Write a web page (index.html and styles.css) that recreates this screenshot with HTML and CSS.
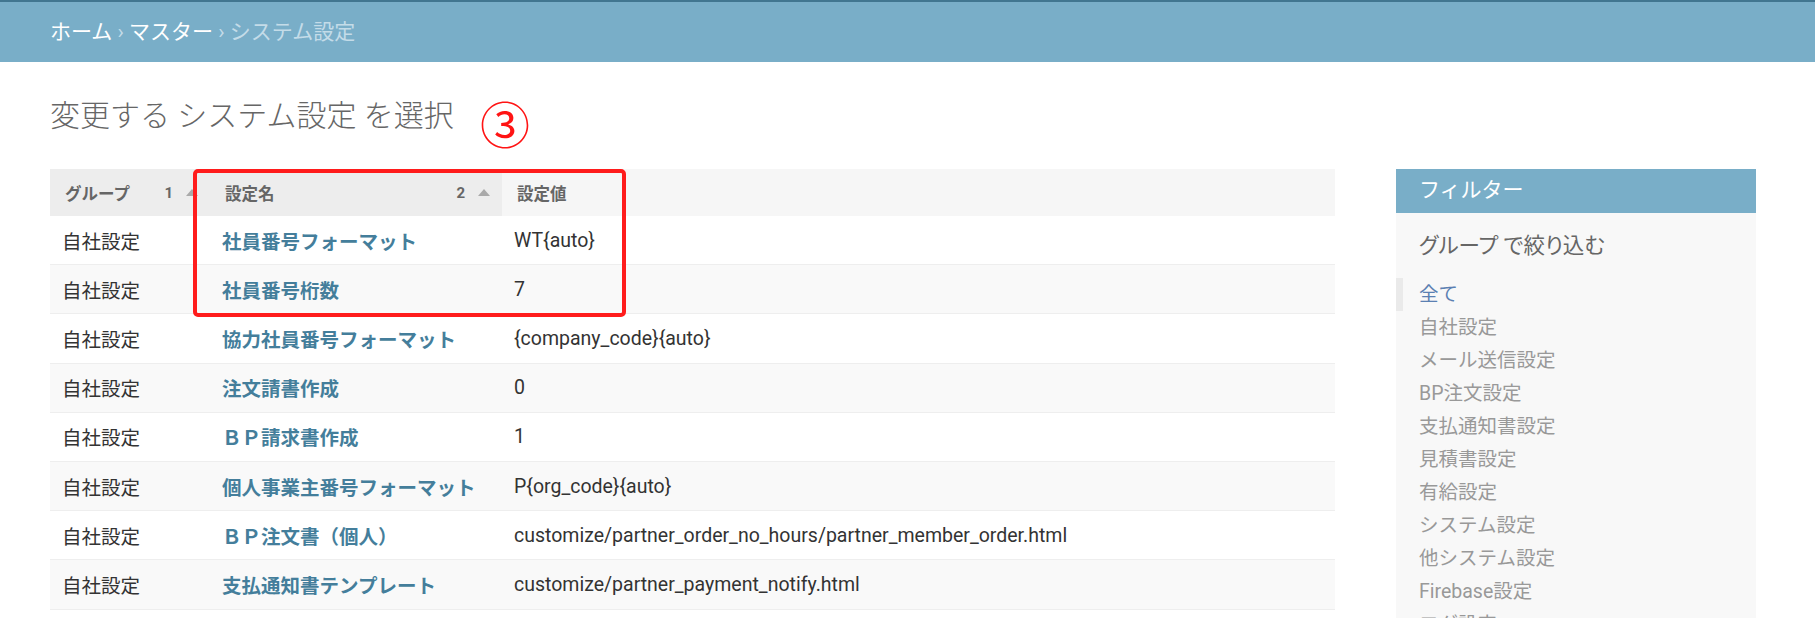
FILE: index.html
```html
<!DOCTYPE html>
<html lang="ja">
<head>
    <meta charset="UTF-8">
    <title>変更する システム設定 を選択</title>
    <link rel="stylesheet" href="styles.css">
</head>
<body>
    <!-- Breadcrumbs -->
    <div class="breadcrumbs">
        <a href="#">ホーム</a> › <a href="#">マスター</a> › システム設定
    </div>

    <div class="content">
        <h1 class="title">変更する システム設定 を選択<span class="marker">③</span></h1>

        <div class="changelist">
            <div class="results">
                <table class="result-list">
                    <colgroup>
                        <col class="col-group">
                        <col class="col-name">
                        <col class="col-value">
                    </colgroup>
                    <thead>
                        <tr>
                            <th class="sorted">
                                <div class="th-inner">
                                    <span>グループ</span>
                                    <span class="sortoptions">
                                        <span class="priority">1</span>
                                        <svg class="arrow" width="12" height="7" viewBox="0 0 12 7"><path d="M0 7 L6 0 L12 7 Z" fill="#aaa"/></svg>
                                    </span>
                                </div>
                            </th>
                            <th class="sorted">
                                <div class="th-inner">
                                    <span>設定名</span>
                                    <span class="sortoptions">
                                        <span class="priority">2</span>
                                        <svg class="arrow" width="12" height="7" viewBox="0 0 12 7"><path d="M0 7 L6 0 L12 7 Z" fill="#aaa"/></svg>
                                    </span>
                                </div>
                            </th>
                            <th>
                                <div class="th-inner"><span>設定値</span></div>
                            </th>
                        </tr>
                    </thead>
                    <tbody>
                        <tr><td>自社設定</td><td><a href="#">社員番号フォーマット</a></td><td>WT{auto}</td></tr>
                        <tr><td>自社設定</td><td><a href="#">社員番号桁数</a></td><td>7</td></tr>
                        <tr><td>自社設定</td><td><a href="#">協力社員番号フォーマット</a></td><td>{company_code}{auto}</td></tr>
                        <tr><td>自社設定</td><td><a href="#">注文請書作成</a></td><td>0</td></tr>
                        <tr><td>自社設定</td><td><a href="#">ＢＰ請求書作成</a></td><td>1</td></tr>
                        <tr><td>自社設定</td><td><a href="#">個人事業主番号フォーマット</a></td><td>P{org_code}{auto}</td></tr>
                        <tr><td>自社設定</td><td><a href="#">ＢＰ注文書（個人）</a></td><td>customize/partner_order_no_hours/partner_member_order.html</td></tr>
                        <tr><td>自社設定</td><td><a href="#">支払通知書テンプレート</a></td><td>customize/partner_payment_notify.html</td></tr>
                    </tbody>
                </table>
                <!-- annotation box -->
                <div class="highlight"></div>
            </div>

            <!-- Filter -->
            <div class="filter">
                <h2>フィルター</h2>
                <h3>グループ で絞り込む</h3>
                <ul>
                    <li class="selected"><a href="#">全て</a></li>
                    <li><a href="#">自社設定</a></li>
                    <li><a href="#">メール送信設定</a></li>
                    <li><a href="#">BP注文設定</a></li>
                    <li><a href="#">支払通知書設定</a></li>
                    <li><a href="#">見積書設定</a></li>
                    <li><a href="#">有給設定</a></li>
                    <li><a href="#">システム設定</a></li>
                    <li><a href="#">他システム設定</a></li>
                    <li><a href="#">Firebase設定</a></li>
                    <li><a href="#">ログ設定</a></li>
                </ul>
            </div>
        </div>
    </div>
</body>
</html>
```

FILE: styles.css
```css
body {
    margin: 0;
    font-family: Roboto, "Noto Sans CJK JP", sans-serif;
    color: #333;
    background: #fff;
    overflow: hidden;
}

a {
    text-decoration: none;
}

.breadcrumbs {
    border-top: 2px solid #417690;
    background-color: #79aec8;
    color: #c4dce8;
    font-size: 21px;
    line-height: 30px;
    padding: 15px 50px;
}

.breadcrumbs a {
    color: #fff;
}

.content {
    padding: 36px 59px 0 50px;
}

.title {
    position: relative;
    margin: 0 0 35px;
    font-size: 30px;
    line-height: 36px;
    font-weight: 300;
    color: #666;
}

.marker {
    position: absolute;
    left: 430px;
    top: 4px;
    font-size: 50px;
    line-height: 50px;
    font-weight: 400;
    color: #ff1414;
}

.changelist {
    display: flex;
    align-items: flex-start;
}

.results {
    position: relative;
    flex: 1;
}

.result-list {
    width: 100%;
    border-collapse: collapse;
    table-layout: fixed;
}

.col-group {
    width: 160px;
}

.col-name {
    width: 292px;
}

.result-list th {
    height: 47px;
    padding: 0 12px 0 15px;
    background-color: #f6f6f6;
    color: #666;
    font-size: 16.5px;
    font-weight: bold;
    text-align: left;
    white-space: nowrap;
    vertical-align: middle;
}

.result-list th.sorted {
    background-color: #ededed;
}

.th-inner {
    display: flex;
    justify-content: space-between;
    align-items: center;
}

.sortoptions {
    display: flex;
    align-items: center;
    gap: 13px;
}

.priority {
    font-size: 15px;
    color: #666;
}

.arrow {
    display: block;
}

.result-list td {
    height: 48.2px;
    padding: 0 12px;
    border-bottom: 1px solid #eee;
    font-size: 19.5px;
    white-space: nowrap;
    vertical-align: middle;
}

.result-list tbody tr:nth-child(even) td {
    background-color: #f9f9f9;
}

.result-list td a {
    color: #447e9b;
    font-weight: bold;
}

.highlight {
    position: absolute;
    left: 143px;
    top: 0;
    width: 433px;
    height: 148px;
    box-sizing: border-box;
    border: 4px solid #ff1c1c;
    border-radius: 5px;
}

.filter {
    width: 360px;
    margin-left: 61px;
    min-height: 600px;
    background-color: #f8f8f8;
}

.filter h2 {
    margin: 0;
    padding: 7px 23px 8px;
    background-color: #79aec8;
    color: #fff;
    font-size: 21px;
    line-height: 29px;
    font-weight: 400;
}

.filter h3 {
    margin: 20px 0 19px;
    padding: 0 23px;
    font-size: 21.5px;
    line-height: 26px;
    font-weight: 400;
    color: #666;
    font-feature-settings: "palt";
}

.filter ul {
    list-style: none;
    margin: 0;
    padding: 0 23px;
}

.filter li {
    padding: 1.5px 0;
    font-size: 19.5px;
    line-height: 30px;
}

.filter li a {
    display: block;
    color: #999;
}

.filter li.selected {
    border-left: 7px solid #eaeaea;
    margin-left: -23px;
    padding-left: 16px;
}

.filter li.selected a {
    color: #5b80b2;
}
```
